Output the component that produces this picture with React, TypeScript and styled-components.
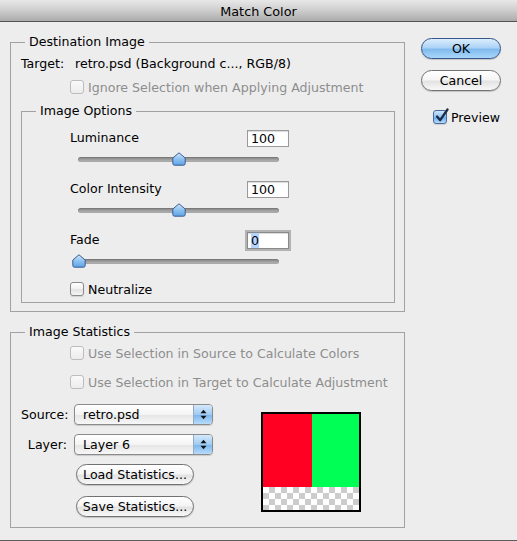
import React, { useId } from 'react';
import styled, { createGlobalStyle } from 'styled-components';

const GlobalStyle = createGlobalStyle`
  html, body {
    margin: 0;
    padding: 0;
    background: #ededed;
  }
  body {
    font-family: "DejaVu Sans", "Liberation Sans", sans-serif;
    font-size: 12.6px;
    color: #000;
  }
  * {
    box-sizing: border-box;
  }
`;

const Window = styled.div`
  width: 517px;
  height: 541px;
  display: flex;
  flex-direction: column;
  background: #ededed;
  border-bottom: 1px solid #5c5c5c;
`;

const TitleBar = styled.div`
  flex: none;
  height: 22px;
  display: flex;
  align-items: center;
  justify-content: center;
  background: linear-gradient(#e8e8e8, #cdcdcd 50%, #ababab);
  border-bottom: 1px solid #535353;
  font-size: 12.8px;
  padding-top: 1px;
`;

const Body = styled.div`
  flex: 1;
  display: flex;
  padding-left: 10px;
`;

const MainColumn = styled.div`
  width: 395px;
  display: flex;
  flex-direction: column;
`;

const SideColumn = styled.div`
  width: 80px;
  margin-left: 16px;
  display: flex;
  flex-direction: column;
`;

const Group = styled.fieldset<{ $top: number; $pad: string }>`
  margin: ${(p) => p.$top}px 0 0;
  padding: ${(p) => p.$pad};
  border: 1px solid #a2a2a2;
  min-width: 0;
`;

const Legend = styled.legend`
  margin-left: 4px;
  padding: 0 4px;
  line-height: 16px;
`;

const TextLine = styled.div`
  height: 16px;
  line-height: 16px;
  white-space: nowrap;
`;

const TargetLabel = styled.span`
  display: inline-block;
  width: 54px;
`;

const CheckRow = styled.label<{ $indent: number; $mt?: number; $disabled?: boolean }>`
  display: flex;
  align-items: center;
  gap: 4px;
  height: 16px;
  margin-left: ${(p) => p.$indent}px;
  margin-top: ${(p) => p.$mt ?? 0}px;
  color: ${(p) => (p.$disabled ? '#8e8e8e' : '#000')};
  white-space: nowrap;
`;

const Box = styled.span<{ $checked?: boolean; $disabled?: boolean }>`
  position: relative;
  width: 14px;
  height: 14px;
  flex: none;
  border-radius: 3px;
  border: 1px solid ${(p) => (p.$disabled ? '#bdbdbd' : p.$checked ? '#4b6b9f' : '#8a8a8a')};
  background: ${(p) =>
    p.$checked
      ? 'linear-gradient(#cfe6fb, #8fc3f1 50%, #6eaeea 55%, #b4dcfc)'
      : p.$disabled
      ? 'linear-gradient(#fafafa, #ececec)'
      : 'linear-gradient(#ffffff, #f1f1f1 50%, #e3e3e3 55%, #f6f6f6)'};
  box-shadow: ${(p) => (p.$disabled ? 'none' : '0 1px 1px rgba(0,0,0,0.12)')};
`;

const CheckMark = styled.svg`
  position: absolute;
  left: 0px;
  top: -3px;
`;

const OptionsBody = styled.div`
  margin-left: 38px;
  width: 219px;
  display: flex;
  flex-direction: column;
`;

const FieldRow = styled.div`
  height: 17px;
  display: flex;
  align-items: center;
  justify-content: space-between;
`;

const FieldLabel = styled.span`
  margin-top: -3px;
`;

const NumberField = styled.div<{ $focused?: boolean }>`
  width: 42px;
  height: 17px;
  background: #fff;
  border: 1px solid ${(p) => (p.$focused ? '#8a8a8a' : '#9a9a9a')};
  box-shadow: ${(p) =>
    p.$focused ? '0 0 0 2px #b3b3b3, inset 0 1px 1px rgba(0,0,0,0.15)' : 'inset 0 1px 1px rgba(0,0,0,0.15)'};
  padding-left: 3px;
  line-height: 15px;
`;

const Selected = styled.span`
  background: #b5d5ff;
`;

const Slider = styled.div`
  position: relative;
  width: 214px;
  height: 14px;
  margin: 5px 0 15px 2px;
`;

const Track = styled.div`
  margin: 5px 7px 0 6px;
  height: 5px;
  border-radius: 3px;
  background: linear-gradient(#7e7e7e, #a4a4a4 60%, #bdbdbd);
  box-shadow: inset 0 0 0 1px rgba(0, 0, 0, 0.08);
`;

const Thumb = styled.svg`
  position: absolute;
  top: 0;
`;

const BottomArea = styled.div`
  display: flex;
  margin-top: 14px;
`;

const PopupColumn = styled.div`
  display: flex;
  flex-direction: column;
`;

const PopupRow = styled.div<{ $mt?: number }>`
  display: flex;
  align-items: center;
  gap: 7px;
  margin-top: ${(p) => p.$mt ?? 0}px;
`;

const PopupLabel = styled.span`
  width: 46px;
  text-align: right;
  white-space: nowrap;
`;

const Popup = styled.div`
  width: 139px;
  height: 21px;
  display: flex;
  border: 1px solid #8b8b8b;
  border-radius: 4px;
  overflow: hidden;
  background: linear-gradient(#ffffff, #f4f4f4 50%, #e6e6e6 55%, #f7f7f7);
  box-shadow: 0 1px 1px rgba(0, 0, 0, 0.15);
`;

const PopupText = styled.span`
  flex: 1;
  padding-left: 8px;
  line-height: 19px;
`;

const PopupArrows = styled.span`
  width: 19px;
  display: flex;
  align-items: center;
  justify-content: center;
  border-left: 1px solid #98a9c6;
  background: linear-gradient(#d5e9fb, #9fcbf3 50%, #7fb8ee 55%, #b8dcfb);
`;

const PushButton = styled.button<{ $primary?: boolean; $width: number; $mt?: number; $ml?: number }>`
  width: ${(p) => p.$width}px;
  height: 21px;
  margin: ${(p) => p.$mt ?? 0}px 0 0 ${(p) => p.$ml ?? 0}px;
  padding: 0;
  border-radius: 11px;
  border: 1px solid ${(p) => (p.$primary ? '#35558b' : '#727272')};
  background: ${(p) =>
    p.$primary
      ? 'linear-gradient(#dcedfc, #acd3f6 45%, #80baee 55%, #aad7fb)'
      : 'linear-gradient(#ffffff, #f5f5f5 45%, #e3e3e3 55%, #f8f8f8)'};
  box-shadow: 0 1px 1px rgba(0, 0, 0, 0.18);
  font-family: inherit;
  font-size: 12.6px;
  color: #000;
  line-height: 19px;
`;

const Swatch = styled.div`
  width: 100px;
  height: 100px;
  margin: 8px 0 0 48px;
  border: 2px solid #000;
  display: flex;
  flex-direction: column;
`;

const SwatchColors = styled.div`
  height: 73px;
  display: flex;
`;

const ColorBlock = styled.div<{ $color: string; $w?: number }>`
  background: ${(p) => p.$color};
  width: ${(p) => (p.$w ? `${p.$w}px` : 'auto')};
  flex: ${(p) => (p.$w ? 'none' : 1)};
`;

const Checker = styled.div`
  flex: 1;
  background-color: #fff;
  background-image: conic-gradient(#cccccc 25%, #ffffff 0 50%, #cccccc 0 75%, #ffffff 0);
  background-size: 12px 12px;
`;

type CheckProps = {
  label: string;
  indent: number;
  mt?: number;
  checked?: boolean;
  disabled?: boolean;
};

const Check: React.FC<CheckProps> = ({ label, indent, mt, checked, disabled }) => (
  <CheckRow $indent={indent} $mt={mt} $disabled={disabled}>
    <Box $checked={checked} $disabled={disabled}>
      {checked && (
        <CheckMark width="16" height="16" viewBox="0 0 16 16">
          <path d="M3 8.5 L6.2 12.2 L13.5 1.5" fill="none" stroke="#1c2a48" strokeWidth="2.3" strokeLinecap="round" strokeLinejoin="round" />
        </CheckMark>
      )}
    </Box>
    {label}
  </CheckRow>
);

type SliderProps = {
  label: string;
  value: number;
  min: number;
  max: number;
  focused?: boolean;
};

const SliderField: React.FC<SliderProps> = ({ label, value, min, max, focused }) => {
  const id = useId();
  const pct = (value - min) / (max - min);
  return (
    <>
      <FieldRow>
        <FieldLabel>{label}</FieldLabel>
        <NumberField $focused={focused}>{focused ? <Selected>{value}</Selected> : value}</NumberField>
      </FieldRow>
      <Slider>
        <Track />
        <Thumb width="14" height="14" viewBox="0 0 14 14" style={{ left: `${pct * 200}px` }}>
          <defs>
            <linearGradient id={id} x1="0" y1="0" x2="0" y2="1">
              <stop offset="0" stopColor="#d3e8fb" />
              <stop offset="0.5" stopColor="#8cc2f1" />
              <stop offset="1" stopColor="#5fa3e6" />
            </linearGradient>
          </defs>
          <path d="M7 0.8 L13.2 6 L13.2 11.5 Q13.2 13.2 11.5 13.2 L2.5 13.2 Q0.8 13.2 0.8 11.5 L0.8 6 Z" fill={`url(#${id})`} stroke="#3c5c92" strokeWidth="1" />
        </Thumb>
      </Slider>
    </>
  );
};

const PopupArrowsIcon = () => (
  <svg width="7" height="11" viewBox="0 0 7 11">
    <path d="M0.5 4.2 L3.5 0.8 L6.5 4.2 Z" fill="#111" />
    <path d="M0.5 6.8 L3.5 10.2 L6.5 6.8 Z" fill="#111" />
  </svg>
);

export default function App() {
  return (
    <>
      <GlobalStyle />
      <Window>
        <TitleBar>Match Color</TitleBar>
        <Body>
          <MainColumn>
            <Group $top={12} $pad="6px 9px 8px 10px">
              <Legend>Destination Image</Legend>
              <TextLine>
                <TargetLabel>Target:</TargetLabel>retro.psd (Background c..., RGB/8)
              </TextLine>
              <Check label="Ignore Selection when Applying Adjustment" indent={49} mt={7} disabled />
              <Group $top={8} $pad="11px 10px 5px 10px">
                <Legend>Image Options</Legend>
                <OptionsBody>
                  <SliderField label="Luminance" value={100} min={1} max={199} />
                  <SliderField label="Color Intensity" value={100} min={1} max={199} />
                  <SliderField label="Fade" value={0} min={0} max={100} focused />
                  <Check label="Neutralize" indent={0} mt={-2} />
                </OptionsBody>
              </Group>
            </Group>

            <Group $top={12} $pad="5px 10px 10px 10px">
              <Legend>Image Statistics</Legend>
              <Check label="Use Selection in Source to Calculate Colors" indent={49} disabled />
              <Check label="Use Selection in Target to Calculate Adjustment" indent={49} mt={13} disabled />
              <BottomArea>
                <PopupColumn>
                  <PopupRow>
                    <PopupLabel>Source:</PopupLabel>
                    <Popup>
                      <PopupText>retro.psd</PopupText>
                      <PopupArrows>
                        <PopupArrowsIcon />
                      </PopupArrows>
                    </Popup>
                  </PopupRow>
                  <PopupRow $mt={9}>
                    <PopupLabel>Layer:</PopupLabel>
                    <Popup>
                      <PopupText>Layer 6</PopupText>
                      <PopupArrows>
                        <PopupArrowsIcon />
                      </PopupArrows>
                    </Popup>
                  </PopupRow>
                  <PushButton $width={118} $mt={9} $ml={55}>Load Statistics...</PushButton>
                  <PushButton $width={118} $mt={11} $ml={55}>Save Statistics...</PushButton>
                </PopupColumn>
                <Swatch>
                  <SwatchColors>
                    <ColorBlock $color="#ff0022" $w={49} />
                    <ColorBlock $color="#00ff55" />
                  </SwatchColors>
                  <Checker />
                </Swatch>
              </BottomArea>
            </Group>
          </MainColumn>

          <SideColumn>
            <PushButton $primary $width={80} $mt={16}>OK</PushButton>
            <PushButton $width={80} $mt={11}>Cancel</PushButton>
            <Check label="Preview" indent={12} mt={18} checked />
          </SideColumn>
        </Body>
      </Window>
    </>
  );
}
